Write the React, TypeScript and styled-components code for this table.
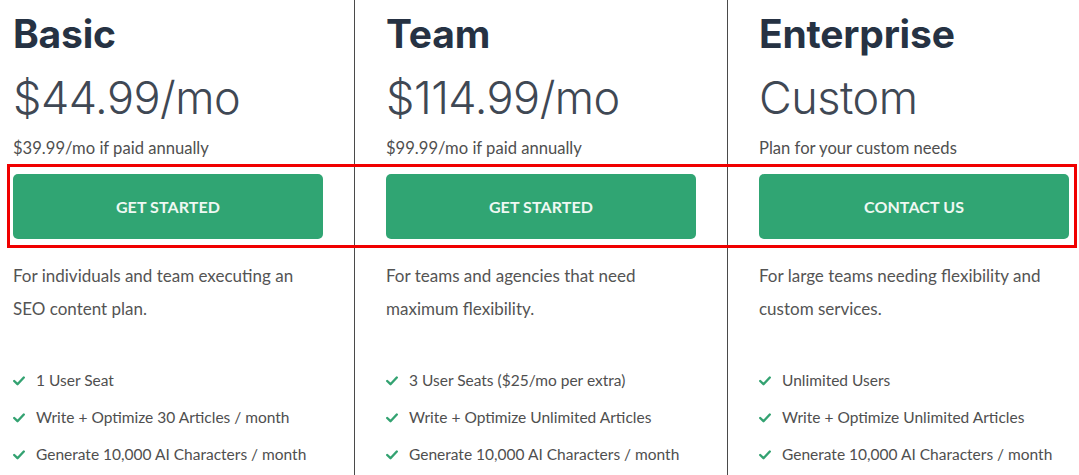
import * as React from 'react'
import styled, { createGlobalStyle } from 'styled-components'

const GlobalStyle = createGlobalStyle`
  html, body {
    margin: 0;
    padding: 0;
    background: #ffffff;
  }
`

const Page = styled.div`
  position: relative;
  width: 1079px;
  height: 475px;
  overflow: hidden;
  background: #ffffff;
`

const Columns = styled.div`
  display: grid;
  grid-template-columns: repeat(3, 373px);
  margin-left: -18px;
`

const Plan = styled.div`
  box-sizing: border-box;
  height: 475px;
  padding: 14px 31px 0 31px;
  border-right: 1px solid #4a4a4a;
  display: flex;
  flex-direction: column;
`

const Title = styled.h2`
  margin: 0;
  font-family: Inter, 'Noto Sans', sans-serif;
  font-weight: 700;
  font-size: 39px;
  line-height: 40px;
  color: #263243;
  letter-spacing: -0.2px;
`

const Price = styled.div`
  margin-top: 19px;
  font-family: Inter, 'Noto Sans', sans-serif;
  font-weight: 300;
  font-size: 45px;
  line-height: 50px;
  color: #3f4854;
  letter-spacing: -0.5px;
`

const Note = styled.div`
  margin-top: 15px;
  font-family: Lato, 'Open Sans', sans-serif;
  font-size: 16.6px;
  line-height: 20px;
  color: #4f4f4f;
`

const Button = styled.a`
  margin-top: 16px;
  height: 65px;
  border-radius: 5px;
  background: #30a573;
  color: #eef8f2;
  display: flex;
  align-items: center;
  justify-content: center;
  font-family: Lato, 'Open Sans', sans-serif;
  font-weight: 700;
  font-size: 16px;
  letter-spacing: 0.1px;
  text-transform: uppercase;
  text-decoration: none;
`

const Description = styled.p`
  margin: 20px 0 0 0;
  max-width: 288px;
  font-family: Lato, 'Open Sans', sans-serif;
  font-size: 17px;
  line-height: 33px;
  color: #545454;
`

const Features = styled.ul`
  list-style: none;
  margin: 45px 0 0 0;
  padding: 0;
  display: flex;
  flex-direction: column;
  gap: 16px;
`

const Feature = styled.li`
  display: flex;
  align-items: center;
  gap: 11px;
  font-family: Lato, 'Open Sans', sans-serif;
  font-size: 15.5px;
  line-height: 21px;
  color: #4f4f4f;
`

const Highlight = styled.div`
  position: absolute;
  left: 7px;
  top: 164px;
  width: 1070px;
  height: 84px;
  box-sizing: border-box;
  border: 3px solid #f00000;
  pointer-events: none;
`

const Check = () => (
  <svg width="12" height="10" viewBox="0 0 12 10" aria-hidden="true">
    <polyline
      points="1.2,5 4.5,8.2 10.8,1.5"
      fill="none"
      stroke="#33a271"
      strokeWidth="2.4"
      strokeLinecap="round"
      strokeLinejoin="round"
    />
  </svg>
)

type PlanData = {
  name: string
  price: string
  note: string
  cta: string
  description: string
  features: string[]
}

const plans: PlanData[] = [
  {
    name: 'Basic',
    price: '$44.99/mo',
    note: '$39.99/mo if paid annually',
    cta: 'Get Started',
    description: 'For individuals and team executing an SEO content plan.',
    features: ['1 User Seat', 'Write + Optimize 30 Articles / month', 'Generate 10,000 AI Characters / month'],
  },
  {
    name: 'Team',
    price: '$114.99/mo',
    note: '$99.99/mo if paid annually',
    cta: 'Get Started',
    description: 'For teams and agencies that need maximum flexibility.',
    features: ['3 User Seats ($25/mo per extra)', 'Write + Optimize Unlimited Articles', 'Generate 10,000 AI Characters / month'],
  },
  {
    name: 'Enterprise',
    price: 'Custom',
    note: 'Plan for your custom needs',
    cta: 'Contact Us',
    description: 'For large teams needing flexibility and custom services.',
    features: ['Unlimited Users', 'Write + Optimize Unlimited Articles', 'Generate 10,000 AI Characters / month'],
  },
]

export default function App() {
  return (
    <>
      <GlobalStyle />
      <Page>
        <Columns>
          {plans.map((p) => (
            <Plan key={p.name}>
              <Title>{p.name}</Title>
              <Price>{p.price}</Price>
              <Note>{p.note}</Note>
              <Button href="#">{p.cta}</Button>
              <Description>{p.description}</Description>
              <Features>
                {p.features.map((f) => (
                  <Feature key={f}>
                    <Check />
                    {f}
                  </Feature>
                ))}
              </Features>
            </Plan>
          ))}
        </Columns>
        <Highlight />
      </Page>
    </>
  )
}
